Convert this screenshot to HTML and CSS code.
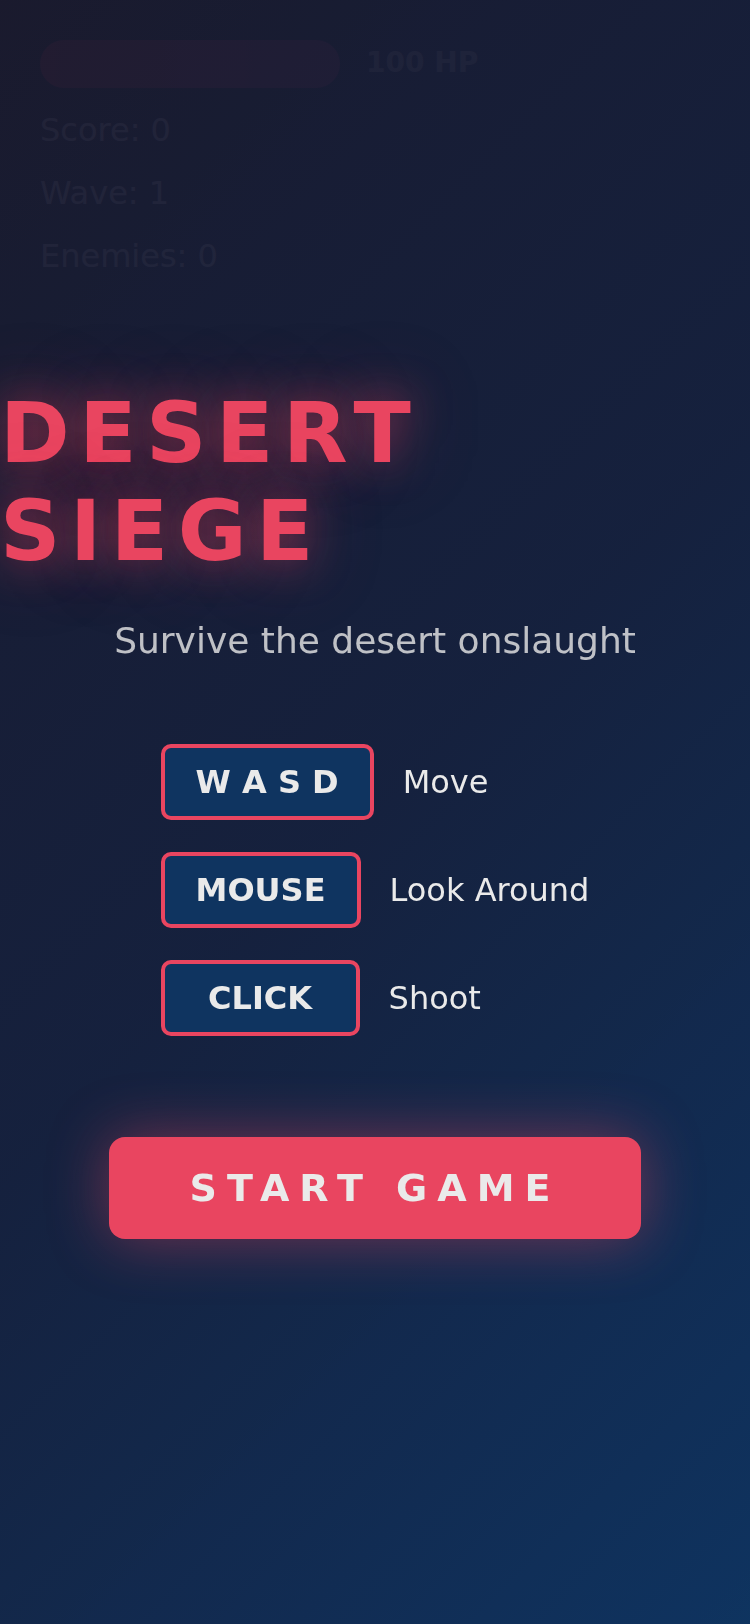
FILE: index.html
```html
<!DOCTYPE html>
<html lang="en">
<head>
<meta charset="utf-8">
<title>Desert Siege</title>
<link rel="stylesheet" href="styles.css">
</head>
<body>
  <div class="hud">
    <div class="hp-row">
      <div class="hp-bar"><div class="hp-fill"></div></div>
      <div class="hp-text">100 HP</div>
    </div>
    <div class="stats">
      <div class="stat">Score: 0</div>
      <div class="stat">Wave: 1</div>
      <div class="stat">Enemies: 0</div>
    </div>
  </div>

  <div class="overlay">
    <h1 class="title">DESERT SIEGE</h1>
    <p class="subtitle">Survive the desert onslaught</p>
    <div class="controls">
      <div class="control-row">
        <span class="key">W A S D</span>
        <span class="label">Move</span>
      </div>
      <div class="control-row">
        <span class="key">MOUSE</span>
        <span class="label">Look Around</span>
      </div>
      <div class="control-row">
        <span class="key">CLICK</span>
        <span class="label">Shoot</span>
      </div>
    </div>
    <button class="start-btn">START GAME</button>
  </div>
</body>
</html>
```

FILE: styles.css
```css
html, body {
  margin: 0;
  padding: 0;
  height: 100%;
}

body {
  font-family: "DejaVu Sans", "Liberation Sans", sans-serif;
  background: linear-gradient(135deg, #1a1a2e 0%, #16213e 50%, #0f3460 100%);
  color: #ffffff;
  overflow: hidden;
  min-height: 100vh;
}

.hud {
  padding: 40px 0 0 40px;
}

.hp-row {
  display: flex;
  align-items: center;
  gap: 26px;
  height: 48px;
}

.hp-bar {
  width: 300px;
  height: 48px;
  border-radius: 24px;
  background: rgba(255, 255, 255, 0.15);
  overflow: hidden;
}

.hp-fill {
  width: 100%;
  height: 100%;
  background: linear-gradient(90deg, #e94560, #c0396f);
}

.hp-text {
  font-size: 28px;
  font-weight: bold;
  line-height: 32px;
  margin-top: -3px;
  color: rgba(255, 255, 255, 0.75);
}

.stats {
  margin-top: 23px;
  display: flex;
  flex-direction: column;
  gap: 25px;
}

.stat {
  font-size: 32px;
  line-height: 38px;
}

.overlay {
  position: fixed;
  inset: 0;
  background: linear-gradient(135deg, rgba(26, 26, 46, 0.965) 0%, rgba(22, 33, 62, 0.965) 50%, rgba(15, 52, 96, 0.965) 100%);
  display: flex;
  flex-direction: column;
  align-items: center;
  justify-content: center;
}

.title {
  align-self: stretch;
  margin: 0 0 40px 0;
  font-size: 84px;
  font-weight: bold;
  line-height: 97.8px;
  letter-spacing: 9.5px;
  color: #e94560;
  text-align: left;
  text-shadow: 0 0 40px rgba(233, 69, 96, 0.5), 0 0 80px rgba(233, 69, 96, 0.35);
}

.subtitle {
  margin: 0 0 82px 0;
  font-size: 36px;
  line-height: 42px;
  color: rgba(234, 234, 234, 0.8);
}

.controls {
  display: flex;
  flex-direction: column;
  gap: 32px;
  margin-bottom: 101px;
}

.control-row {
  display: flex;
  align-items: center;
  gap: 29px;
}

.key {
  box-sizing: border-box;
  min-width: 199px;
  padding: 15px 31px;
  border: 4px solid #e94560;
  border-radius: 10px;
  background: #0f3460;
  color: #eaeaea;
  font-size: 32px;
  font-weight: bold;
  line-height: 38px;
  text-align: center;
  white-space: pre;
}

.label {
  font-size: 32px;
  line-height: 38px;
  color: #eaeaea;
}

.start-btn {
  font-family: "DejaVu Sans", "Liberation Sans", sans-serif;
  font-size: 38px;
  font-weight: bold;
  letter-spacing: 10px;
  line-height: 44px;
  padding: 29px 81px;
  border: none;
  border-radius: 16px;
  background: #e94560;
  color: #eaeaea;
  box-shadow: 0 0 60px rgba(233, 69, 96, 0.45);
}
```
